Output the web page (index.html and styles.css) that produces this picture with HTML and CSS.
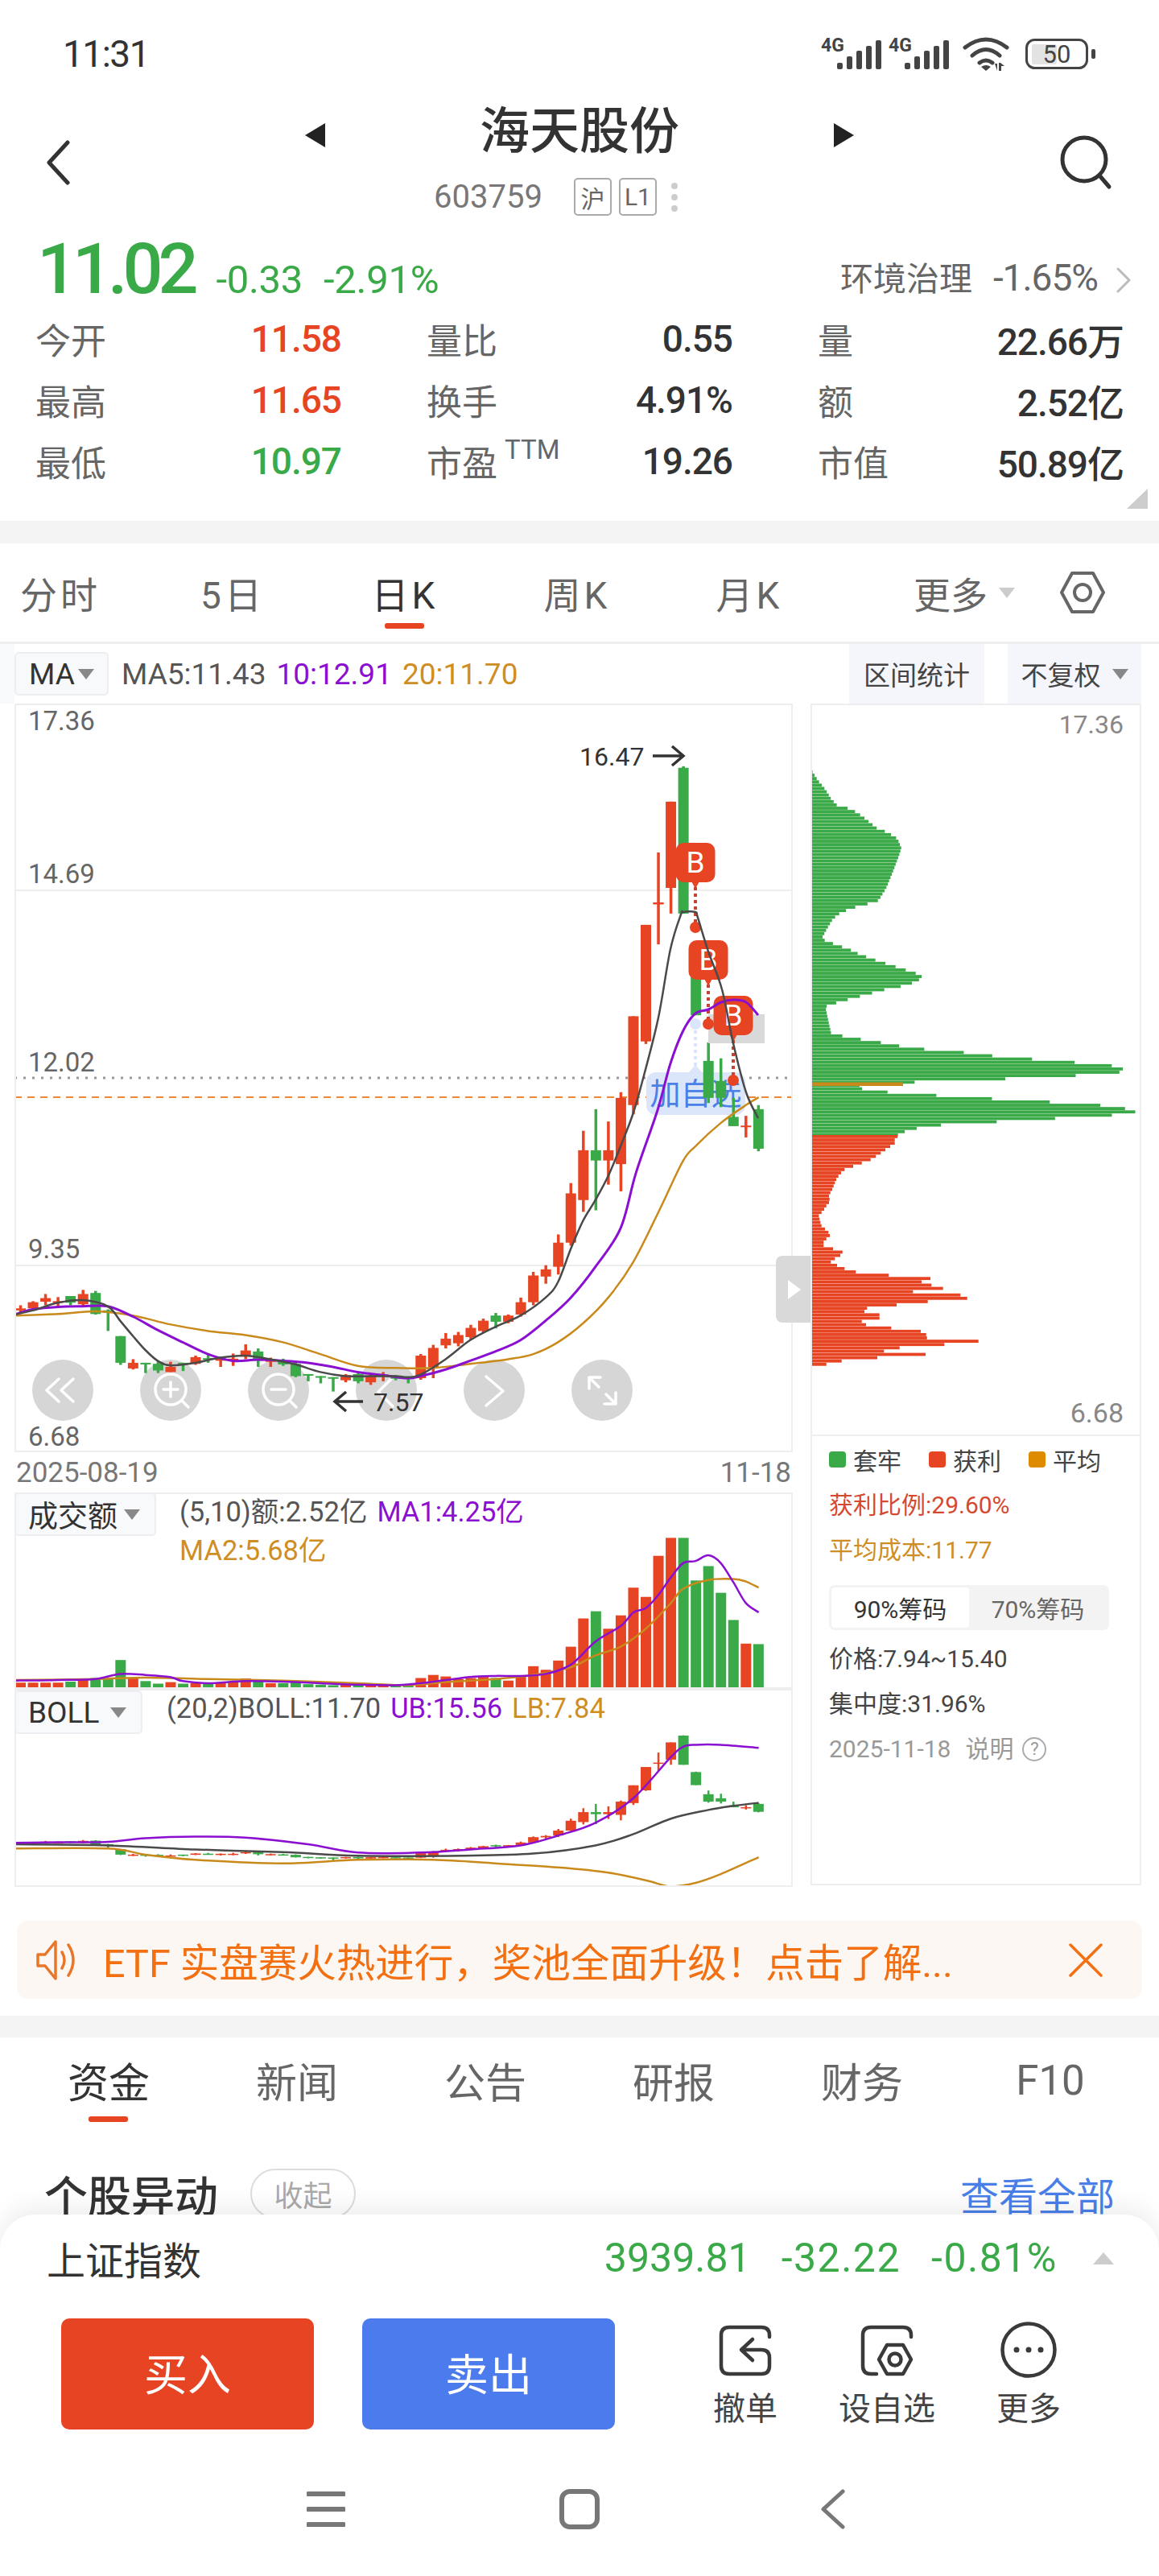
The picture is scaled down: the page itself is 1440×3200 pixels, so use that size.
FILE: index.html
```html
<!DOCTYPE html>
<html lang="zh-CN">
<head>
    <meta charset="UTF-8">
    <meta name="viewport" content="width=device-width, initial-scale=1.0">
    <title>海天股份</title>
    <link rel="stylesheet" href="styles.css">
</head>
<body>

<div class="status">
    <span class="time">11:31</span>
    <div class="status-icons">
        <svg class="sig" viewBox="0 0 76 40"><text x="0" y="17">4G</text><rect x="20" y="31" width="7" height="8" rx="2"/><rect x="32" y="23" width="7" height="16" rx="2"/><rect x="44" y="16" width="7" height="23" rx="2"/><rect x="56" y="10" width="7" height="29" rx="2"/><rect x="68" y="3" width="7" height="36" rx="2"/></svg>
        <svg class="sig" viewBox="0 0 76 40"><text x="0" y="17">4G</text><rect x="20" y="31" width="7" height="8" rx="2"/><rect x="32" y="23" width="7" height="16" rx="2"/><rect x="44" y="16" width="7" height="23" rx="2"/><rect x="56" y="10" width="7" height="29" rx="2"/><rect x="68" y="3" width="7" height="36" rx="2"/></svg>
        <svg class="wifi" viewBox="0 0 58 42"><path d="M3 13Q29 -7 55 13M12 23Q29 8 46 23M21 32Q29 26 37 32" fill="none" stroke="#444" stroke-width="5" stroke-linecap="round"/><path d="M23 37Q29 33 35 37L29 42ZM40 33h3v9zM48 42h-3V32h2l5 4h-4z" fill="#444"/></svg>
        <svg class="battery" viewBox="0 0 88 38"><rect x="1.5" y="1.5" width="75" height="35" rx="10" fill="none" stroke="#444" stroke-width="3"/><rect x="8" y="7" width="31" height="25" rx="2" fill="#e3e3e3"/><text x="39" y="30" text-anchor="middle">50</text><rect x="82" y="13" width="5" height="12" rx="2" fill="#444"/></svg>
    </div>
</div>

<div class="head">
    <svg class="back" viewBox="0 0 30 56"><path d="M27 3L4 28L27 53" fill="none" stroke="#333" stroke-width="5" stroke-linecap="round" stroke-linejoin="round"/></svg>
    <div class="head-center">
        <div class="title-row">
            <span class="tri-left"></span>
            <h1>海天股份</h1>
            <span class="tri-right"></span>
        </div>
        <div class="code-row">
            <span class="code">603759</span>
            <span class="badge">沪</span>
            <span class="badge">L1</span>
            <span class="dots"><i></i><i></i><i></i></span>
        </div>
    </div>
    <svg class="search" viewBox="0 0 70 70"><circle cx="35" cy="30" r="27" fill="none" stroke="#333" stroke-width="5"/><path d="M54 50L66 64" stroke="#333" stroke-width="5" stroke-linecap="round"/></svg>
</div>

<div class="quote">
    <span class="price">11.02</span>
    <span class="change">-0.33</span>
    <span class="change">-2.91%</span>
    <span class="sector">环境治理</span>
    <span class="sector-pct">-1.65%</span>
    <svg class="more-arrow" viewBox="0 0 18 32"><path d="M2 2L16 16L2 30" fill="none" stroke="#bbb" stroke-width="3" stroke-linecap="round" stroke-linejoin="round"/></svg>
</div>

<div class="stats">
    <div class="stat"><span>今开</span><b class="red">11.58</b></div>
    <div class="stat"><span>量比</span><b>0.55</b></div>
    <div class="stat"><span>量</span><b>22.66万</b></div>
    <div class="stat"><span>最高</span><b class="red">11.65</b></div>
    <div class="stat"><span>换手</span><b>4.91%</b></div>
    <div class="stat"><span>额</span><b>2.52亿</b></div>
    <div class="stat"><span>最低</span><b class="green">10.97</b></div>
    <div class="stat"><span>市盈<sup>TTM</sup></span><b>19.26</b></div>
    <div class="stat"><span>市值</span><b>50.89亿</b></div>
    <span class="corner"></span>
</div>

<div class="band"></div>

<div class="periods">
    <span class="period">分时</span>
    <span class="period">5日</span>
    <span class="period active">日K</span>
    <span class="period">周K</span>
    <span class="period">月K</span>
    <span class="period-more">更多</span>
    <span class="caret caret-light"></span>
    <svg class="hex" viewBox="0 0 56 52"><path d="M15 2H41L54 26L41 50H15L2 26Z" fill="none" stroke="#666" stroke-width="4" stroke-linejoin="round"/><circle cx="28" cy="26" r="10" fill="none" stroke="#666" stroke-width="4"/></svg>
</div>

<div class="tools">
    <span class="tools-edge"></span>
    <span class="tag ma-tag">MA<span class="caret"></span></span>
    <span class="ma-values"><span>MA5:11.43</span><span class="purple">10:12.91</span><span class="orange">20:11.70</span></span>
    <span class="tool-btn range-btn">区间统计</span>
    <span class="tool-btn adjust-btn">不复权<span class="caret"></span></span>
</div>

<div class="charts">
    <div class="chart-col">
        <div class="frame main-frame">
            <svg id="mainChart" viewBox="18 874 967 930" width="967" height="930"></svg>
            <span class="side-tab"></span>
        </div>
        <div class="dates"><span>2025-08-19</span><span>11-18</span></div>
        <div class="frame vol-frame">
            <svg id="volChart" viewBox="18 1854 967 244" width="967" height="244"></svg>
            <span class="tag vol-tag">成交额<span class="caret"></span></span>
            <div class="legend vol-legend">
                <div>(5,10)额:2.52亿<span class="purple">MA1:4.25亿</span></div>
                <div class="orange">MA2:5.68亿</div>
            </div>
        </div>
        <div class="frame boll-frame">
            <svg id="bollChart" viewBox="18 2098 967 246" width="967" height="246"></svg>
            <span class="tag boll-tag">BOLL<span class="caret"></span></span>
            <div class="legend boll-legend">(20,2)BOLL:11.70<span class="purple">UB:15.56</span><span class="orange">LB:7.84</span></div>
        </div>
    </div>

    <div class="frame chip-panel">
        <svg id="chipChart" viewBox="1007 874 411 908" width="411" height="908"></svg>
        <div class="chip-info">
            <div class="chip-legend">
                <span><i class="sq-green"></i>套牢</span>
                <span><i class="sq-red"></i>获利</span>
                <span><i class="sq-orange"></i>平均</span>
            </div>
            <div class="chip-line chip-red">获利比例:29.60%</div>
            <div class="chip-line chip-orange">平均成本:11.77</div>
            <div class="seg"><span class="seg-on">90%筹码</span><span>70%筹码</span></div>
            <div class="chip-line">价格:7.94~15.40</div>
            <div class="chip-line">集中度:31.96%</div>
            <div class="chip-line chip-date">2025-11-18<span class="explain">说明</span><span class="help">?</span></div>
        </div>
    </div>
</div>

<div class="banner">
    <svg class="speaker" viewBox="0 0 50 50"><path d="M2 18H11L24 2V48L11 32H2Z M32 15Q38 25 32 35 M40 6Q52 25 40 44" fill="none" stroke="#e8772a" stroke-width="3.5" stroke-linecap="round" stroke-linejoin="round"/></svg>
    <span class="banner-text">ETF 实盘赛火热进行，奖池全面升级！点击了解...</span>
    <svg class="close" viewBox="0 0 42 42"><path d="M2 2L40 40M40 2L2 40" stroke="#f27012" stroke-width="3.5" stroke-linecap="round"/></svg>
</div>

<div class="band band-low"></div>

<div class="news-tabs">
    <span class="news-tab active">资金</span>
    <span class="news-tab">新闻</span>
    <span class="news-tab">公告</span>
    <span class="news-tab">研报</span>
    <span class="news-tab">财务</span>
    <span class="news-tab">F10</span>
</div>

<div class="section-head">
    <h2>个股异动</h2>
    <span class="collapse">收起</span>
    <span class="view-all">查看全部</span>
</div>

<div class="sheet">
    <div class="index-row">
        <span class="index-name">上证指数</span>
        <span class="index-nums"><span>3939.81</span><span>-32.22</span><span>-0.81%</span></span>
        <span class="index-up"></span>
    </div>
    <div class="actions">
        <button class="trade buy">买入</button>
        <button class="trade sell">卖出</button>
        <div class="action">
            <svg viewBox="0 0 64 70"><path d="M27 35H52Q62 35 62 45V55Q62 65 52 65H12Q2 65 2 55V17Q2 7 12 7H52Q62 7 62 17V19M41 22L27 35L41 48" fill="none" stroke="#3a3a3a" stroke-width="4.5" stroke-linecap="round" stroke-linejoin="round"/></svg>
            <span>撤单</span>
        </div>
        <div class="action">
            <svg viewBox="0 0 64 70"><path d="M62 19V17Q62 7 52 7H12Q2 7 2 17V55Q2 65 12 65H19M32 29H52L62 47L52 65H32L22 47Z" fill="none" stroke="#3a3a3a" stroke-width="4.5" stroke-linecap="round" stroke-linejoin="round"/><circle cx="42" cy="47" r="7.5" fill="none" stroke="#3a3a3a" stroke-width="4.5"/></svg>
            <span>设自选</span>
        </div>
        <div class="action">
            <svg viewBox="0 0 70 70"><circle cx="35" cy="35" r="32.5" fill="none" stroke="#3a3a3a" stroke-width="4.5"/><circle cx="20" cy="35" r="3.5" fill="#3a3a3a"/><circle cx="35" cy="35" r="3.5" fill="#3a3a3a"/><circle cx="50" cy="35" r="3.5" fill="#3a3a3a"/></svg>
            <span>更多</span>
        </div>
    </div>
    <div class="nav">
        <svg viewBox="0 0 48 46" width="48" height="46"><path d="M2 4H46M2 23H46M2 42H46" stroke="#777" stroke-width="6" stroke-linecap="round"/></svg>
        <svg viewBox="0 0 50 50" width="50" height="50"><rect x="3" y="3" width="44" height="44" rx="10" fill="none" stroke="#777" stroke-width="6"/></svg>
        <svg viewBox="0 0 32 50" width="32" height="50"><path d="M28 3L4 25L28 47" fill="none" stroke="#777" stroke-width="5" stroke-linecap="round" stroke-linejoin="round"/></svg>
    </div>
</div>

<script src="chart.js"></script>
</body>
</html>
```

FILE: styles.css
```css
* {
    box-sizing: border-box;
}
html, body {
    margin: 0;
    padding: 0;
}
body {
    position: relative;
    width: 1440px;
    height: 3200px;
    overflow: hidden;
    background: #fff;
    color: #333;
    font-family: Roboto, "Noto Sans CJK SC", sans-serif;
}
h1, h2 {
    margin: 0;
    font-weight: 400;
}
.red { color: #e64423; }
.green { color: #3aa948; }
.purple { color: #8b0fd0; }
.orange { color: #cf8e24; }

/* status bar */
.status {
    display: flex;
    justify-content: space-between;
    align-items: center;
    height: 132px;
    padding: 2px 78px 0;
}
.time {
    font-size: 46px;
    letter-spacing: -1.5px;
    color: #333;
}
.status-icons {
    display: flex;
    align-items: center;
}
.sig {
    width: 76px;
    height: 40px;
    margin-right: 8px;
    fill: #444;
    overflow: visible;
}
.sig text {
    font-size: 23px;
    font-weight: 700;
}
.wifi {
    width: 58px;
    height: 42px;
    margin: 0 20px 0 8px;
}
.battery {
    width: 88px;
    height: 38px;
}
.battery text {
    font-size: 31px;
    fill: #444;
}

/* title */
.head {
    display: grid;
    grid-template-columns: 1fr 682px 1fr;
    height: 148px;
}
.back {
    width: 30px;
    height: 56px;
    margin: 42px 0 0 57px;
}
.search {
    width: 70px;
    height: 70px;
    margin: 36px 58px 0 0;
    justify-self: end;
}
.title-row {
    display: flex;
    justify-content: space-between;
    align-items: center;
    height: 64px;
}
.title-row h1 {
    font-size: 62px;
    line-height: 64px;
    font-weight: 500;
    color: #333;
}
.tri-left, .tri-right {
    width: 0;
    height: 0;
    margin-top: 8px;
    border-top: 15px solid transparent;
    border-bottom: 15px solid transparent;
}
.tri-left { border-right: 25px solid #222; }
.tri-right { border-left: 25px solid #222; }
.code-row {
    display: flex;
    align-items: center;
    margin-top: 25px;
    height: 47px;
    padding-left: 160px;
}
.code {
    font-size: 40px;
    color: #777;
    margin-right: 39px;
}
.badge {
    display: flex;
    align-items: center;
    justify-content: center;
    width: 47px;
    height: 47px;
    margin-right: 9px;
    border: 2px solid #aaa;
    border-radius: 5px;
    font-size: 30px;
    color: #666;
}
.dots {
    display: flex;
    flex-direction: column;
    gap: 6px;
    margin-left: 9px;
}
.dots i {
    width: 8px;
    height: 8px;
    border-radius: 50%;
    background: #ccc;
}

/* quote line */
.quote {
    display: flex;
    align-items: baseline;
    height: 103px;
    padding: 9px 0 0 46px;
}
.price {
    font-size: 88px;
    line-height: 90px;
    font-weight: 500;
    letter-spacing: -6px;
    color: #3aa948;
    margin-right: 28px;
}
.change {
    font-size: 49px;
    letter-spacing: -0.3px;
    color: #3aa948;
    margin-right: 26px;
}
.sector {
    position: relative;
    top: -3px;
    margin-left: auto;
    font-size: 41px;
    color: #666;
    margin-right: 26px;
}
.sector-pct {
    position: relative;
    top: -3px;
    font-size: 46px;
    letter-spacing: -1px;
    color: #666;
}
.more-arrow {
    width: 18px;
    height: 32px;
    margin: 0 35px 0 23px;
}

/* stat grid */
.stats {
    position: relative;
    display: grid;
    grid-template-columns: repeat(3, 380px);
    grid-auto-rows: 76px;
    column-gap: 106px;
    height: 264px;
    padding-left: 44px;
}
.stat {
    display: flex;
    justify-content: space-between;
    align-items: center;
    font-size: 44px;
}
.stat span {
    color: #666;
}
.stat b {
    font-size: 46px;
    font-weight: 500;
    letter-spacing: -1px;
}
.stat sup {
    font-size: 33px;
    margin-left: 9px;
    vertical-align: 22px;
    line-height: 0;
}
.corner {
    position: absolute;
    left: 1400px;
    top: 224px;
    width: 0;
    height: 0;
    border-bottom: 25px solid #ccc;
    border-left: 26px solid transparent;
}
.band {
    height: 28px;
    background: #f4f4f4;
}

/* period tabs */
.periods {
    display: flex;
    align-items: center;
    height: 125px;
    border-bottom: 3px solid #eee;
    margin-left: -32px;
}
.period {
    position: relative;
    display: flex;
    align-items: center;
    justify-content: center;
    width: 214px;
    height: 122px;
    font-size: 46px;
    color: #666;
    letter-spacing: 4px;
}
.period.active {
    color: #333;
}
.period.active::after {
    content: "";
    position: absolute;
    left: 82px;
    bottom: 16px;
    width: 49px;
    height: 7px;
    border-radius: 3px;
    background: #e64423;
}
.period-more {
    margin-left: 97px;
    font-size: 46px;
    color: #666;
}
.caret {
    display: inline-block;
    width: 0;
    height: 0;
    border-left: 10px solid transparent;
    border-right: 10px solid transparent;
    border-top: 13px solid #888;
}
.caret-light {
    margin-left: 14px;
    border-top-color: #ccc;
}
.hex {
    width: 56px;
    height: 52px;
    margin-left: 56px;
}

/* indicator toolbar */
.tools {
    display: flex;
    align-items: center;
    height: 74px;
}
.tools-edge {
    width: 18px;
    align-self: stretch;
    background: #f8f9fb;
}
.tag {
    display: flex;
    align-items: center;
    justify-content: space-between;
    padding: 0 16px;
    background: #f8f9fb;
    border: 2px solid #eceef2;
    border-radius: 5px;
    color: #333;
    font-size: 37px;
}
.ma-tag {
    width: 117px;
    height: 54px;
}
.ma-values {
    display: flex;
    gap: 13px;
    margin-left: 16px;
    font-size: 37px;
    color: #555;
}
.tool-btn {
    display: flex;
    align-items: center;
    justify-content: center;
    align-self: stretch;
    background: #f5f6fb;
    font-size: 33px;
    color: #444;
}
.range-btn {
    width: 168px;
    margin-left: auto;
}
.adjust-btn {
    width: 166px;
    margin: 0 22px 0 29px;
    gap: 14px;
}

/* charts */
.charts {
    display: grid;
    grid-template-columns: 967px 411px;
    column-gap: 22px;
    height: 1470px;
    padding-left: 18px;
}
.frame {
    position: relative;
    outline: 2px solid #eee;
    outline-offset: -2px;
}
.frame svg {
    display: block;
}
.main-frame { height: 930px; }
.vol-frame { height: 244px; }
.boll-frame { height: 246px; }
.dates {
    display: flex;
    justify-content: space-between;
    align-items: center;
    height: 50px;
    padding: 0 2px;
    font-size: 35px;
    color: #777;
}
.side-tab {
    position: absolute;
    left: 946px;
    top: 686px;
    width: 44px;
    height: 83px;
    border-radius: 8px 0 0 8px;
    background: #d9d9d9;
}
.side-tab::after {
    content: "";
    position: absolute;
    left: 15px;
    top: 30px;
    border-top: 12px solid transparent;
    border-bottom: 12px solid transparent;
    border-left: 16px solid #fff;
}
.vol-tag, .boll-tag {
    position: absolute;
    left: 0;
    top: 0;
    height: 54px;
    padding: 0 18px 0 15px;
}
.vol-tag { width: 176px; }
.boll-tag { width: 159px; top: 2px; }
.legend {
    position: absolute;
    font-size: 34.5px;
    color: #555;
    white-space: nowrap;
}
.legend span {
    margin-left: 12px;
}
.vol-legend {
    left: 205px;
    top: 0;
    line-height: 48px;
}
.boll-legend {
    left: 189px;
    top: 2px;
    line-height: 44px;
}

/* chip panel */
.chip-panel {
    height: 1468px;
}
.chip-info {
    padding: 0 0 0 23px;
    border-top: 2px solid #eee;
    height: 560px;
}
.chip-legend {
    display: flex;
    gap: 34px;
    height: 58px;
    align-items: center;
    font-size: 30px;
    color: #444;
}
.chip-legend span {
    display: flex;
    align-items: center;
    gap: 9px;
}
.chip-legend i {
    width: 21px;
    height: 20px;
    border-radius: 4px;
}
.sq-green { background: #3aa948; }
.sq-red { background: #e64423; }
.sq-orange { background: #de8b00; }
.chip-line {
    height: 56px;
    line-height: 56px;
    font-size: 30px;
    color: #444;
    white-space: nowrap;
}
.chip-red { color: #d44a30; }
.chip-orange { color: #cf8e24; }
.chip-date {
    display: flex;
    align-items: center;
    color: #999;
}
.explain {
    margin-left: 18px;
}
.help {
    display: flex;
    align-items: center;
    justify-content: center;
    width: 30px;
    height: 30px;
    margin-left: 11px;
    border: 2px solid #aaa;
    border-radius: 50%;
    font-size: 22px;
}
.seg {
    display: flex;
    width: 348px;
    height: 56px;
    margin: 15px 0 8px;
    padding: 3px;
    border-radius: 7px;
    background: #f3f3f3;
    font-size: 30px;
    color: #666;
}
.seg span {
    display: flex;
    align-items: center;
    justify-content: center;
    flex: 1;
}
.seg-on {
    background: #fff;
    color: #333;
    border-radius: 4px;
}

/* notice banner */
.banner {
    display: flex;
    align-items: center;
    height: 97px;
    margin: 42px 21px 0;
    padding: 0 49px 0 24px;
    background: #fdf7f3;
    border-radius: 14px;
}
.speaker {
    width: 50px;
    height: 50px;
    margin-right: 33px;
}
.banner-text {
    font-size: 48.5px;
    color: #f27012;
    white-space: nowrap;
}
.close {
    width: 42px;
    height: 42px;
    margin-left: auto;
}
.band-low {
    margin-top: 21px;
    height: 27px;
}

/* lower tabs */
.news-tabs {
    display: grid;
    grid-template-columns: repeat(6, 234px);
    height: 106px;
    padding-left: 18px;
}
.news-tab {
    position: relative;
    display: flex;
    align-items: center;
    justify-content: center;
    font-size: 51px;
    color: #666;
}
.news-tab.active {
    color: #333;
}
.news-tab.active::after {
    content: "";
    position: absolute;
    left: 92px;
    bottom: 1px;
    width: 49px;
    height: 7px;
    border-radius: 3px;
    background: #e64423;
}
.section-head {
    display: flex;
    align-items: center;
    height: 100px;
    margin-top: 38px;
    padding: 0 55px;
}
.section-head h2 {
    font-size: 54px;
    color: #333;
    font-weight: 500;
}
.collapse {
    display: flex;
    align-items: center;
    justify-content: center;
    width: 131px;
    height: 62px;
    margin-left: 40px;
    border: 2px solid #ddd;
    border-radius: 31px;
    font-size: 36px;
    color: #aaa;
}
.view-all {
    margin-left: auto;
    font-size: 48px;
    color: #4a7fe8;
}

/* bottom sheet lies over the page */
.sheet {
    position: absolute;
    left: 0;
    right: 0;
    top: 2751px;
    bottom: 0;
    background: #fff;
    border-radius: 44px 44px 0 0;
    box-shadow: 0 -10px 30px rgba(0, 0, 0, 0.07);
}
.index-row {
    display: flex;
    align-items: center;
    height: 108px;
    padding: 0 56px 0 58px;
}
.index-name {
    font-size: 48px;
    color: #333;
}
.index-nums {
    display: flex;
    gap: 38px;
    margin-left: auto;
    font-size: 50px;
    color: #3aa948;
}
.index-nums span + span {
    letter-spacing: 1.5px;
}
.index-up {
    margin-left: 44px;
    border-left: 13px solid transparent;
    border-right: 13px solid transparent;
    border-bottom: 15px solid #ccc;
}
.actions {
    display: flex;
    margin-top: 21px;
    padding-left: 76px;
}
.trade {
    width: 314px;
    height: 138px;
    padding: 0 0 5px;
    border: 0;
    border-radius: 10px;
    font-family: inherit;
    font-size: 54px;
    color: #fff;
}
.buy { background: #e64423; }
.sell {
    margin-left: 60px;
    background: #4b7bec;
}
.action {
    display: flex;
    flex-direction: column;
    align-items: center;
    width: 176px;
    font-size: 40px;
    color: #444;
}
.action:nth-child(3) {
    margin-left: 74px;
}
.action svg {
    height: 70px;
    width: 70px;
    margin-top: 4px;
}
.action span {
    margin-top: 14px;
    line-height: 50px;
}
.nav {
    display: grid;
    grid-template-columns: repeat(3, 315px);
    justify-items: center;
    align-items: center;
    justify-content: center;
    margin-top: 74px;
}
```

FILE: chart.js
```js
const RED = '#e64423';
const GREEN = '#3aa948';
const PURPLE = '#8b0fd0';
const ORANGE = '#c98a1b';
const DARK = '#4a4a4a';

// rows and lines were traced off the 1000px crop, so they are in 1.568x units
const S = 1.568;
const X = i => 25.5 + 15.54 * i;
const Y = v => 1360 + v / S;
const P = ([x, y]) => [x / S, Y(y)];

// top, bottom, high, low, colour
const candles = [
    [416,420,410,427,'r'],[404,416,402,420,'r'],[396,403,388,410,'r'],[402,405,394,415,'r'],
    [392,405,392,410,'g'],[388,408,380,412,'r'],[386,427,382,428,'g'],[420,424,418,460,'g'],
    [470,522,470,526,'g'],[522,533,515,535,'r'],[522,525,522,542,'g'],[524,537,518,542,'g'],
    [530,540,520,540,'r'],[522,525,522,538,'g'],[511,524,508,526,'r'],[513,515,505,522,'g'],
    [514,518,510,530,'r'],[514,518,504,528,'r'],[498,510,486,515,'r'],[500,518,494,530,'g'],
    [517,520,512,530,'r'],[520,525,514,528,'g'],[524,548,520,550,'g'],[544,547,544,558,'g'],
    [548,551,548,562,'g'],[550,553,550,578,'g'],[546,556,544,560,'r'],[544,558,542,562,'g'],
    [547,560,544,565,'r'],[545,549,540,558,'r'],[548,553,546,556,'g'],[550,553,550,562,'g'],
    [508,552,505,555,'r'],[493,531,487,552,'r'],[475,488,464,494,'r'],[468,484,462,490,'r'],
    [454,472,448,478,'r'],[440,460,436,464,'r'],[430,442,425,455,'g'],[430,442,428,445,'r'],
    [404,428,395,432,'r'],[352,404,345,410,'r'],[340,354,332,368,'r'],[288,335,272,350,'r'],
    [192,288,172,294,'r'],[108,205,70,228,'r'],[108,128,28,225,'g'],[108,128,52,175,'r'],
    [6,135,-5,188,'r'],[-153,20,-153,38,'r'],[-331,-104,-331,-99,'r'],[-374,-372,-472,-293,'r'],
    [-571,-403,-571,-353,'r'],[-637,-353,-640,-353,'g'],[-282,-155,-286,-155,'g'],[-66,6,-102,16,'g'],
    [-27,6,-71,24,'g'],[43,61,6,61,'g'],[60,63,41,83,'r'],[28,105,20,110,'g']
];

// top of each turnover bar, same units
const volumes = [
    [1145,'r'],[1145,'r'],[1145,'r'],[1145,'r'],[1143,'g'],[1138,'r'],[1136,'g'],[1138,'g'],
    [1101,'g'],[1136,'r'],[1142,'g'],[1147,'g'],[1144,'r'],[1147,'g'],[1146,'r'],[1147,'g'],
    [1146,'r'],[1143,'r'],[1137,'r'],[1139,'g'],[1146,'r'],[1146,'g'],[1142,'g'],[1148,'g'],
    [1149,'g'],[1150,'g'],[1147,'r'],[1147,'g'],[1149,'r'],[1150,'r'],[1150,'g'],[1150,'g'],
    [1136,'r'],[1130,'r'],[1133,'r'],[1138,'r'],[1136,'r'],[1134,'r'],[1136,'g'],[1141,'r'],
    [1132,'r'],[1113,'r'],[1120,'r'],[1102,'r'],[1075,'r'],[1020,'r'],[1006,'g'],[1040,'r'],
    [1014,'r'],[960,'r'],[978,'r'],[898,'r'],[863,'r'],[863,'g'],[946,'g'],[918,'g'],
    [970,'g'],[1023,'g'],[1069,'r'],[1070,'g']
];

const ma5 = [[28,428],[64,420],[113,405],[161,400],[210,412],[234,440],[259,470],[283,497],[307,518],[331,527],[380,522],[429,512],[478,508],[526,515],[575,525],[624,540],[673,548],[721,548],[770,548],[794,550],[819,545],[868,515],[916,478],[965,452],[1014,430],[1063,395],[1087,365],[1112,300],[1136,245],[1160,205],[1185,158]].map(P)
    .concat([[771,1424],[787,1382],[800,1336],[818,1264],[833,1179],[846,1136],[849,1133],[864,1133],[867,1140],[880,1182],[897,1229],[911,1296],[927,1357],[942,1389]]);
const ma10 = [[28,428],[64,418],[113,413],[161,412],[210,412],[259,432],[307,458],[356,482],[405,505],[453,518],[502,516],[551,518],[600,522],[648,530],[697,540],[746,546],[794,552],[819,548],[868,535],[916,518],[965,500],[1014,478],[1063,440],[1112,395],[1160,335],[1209,260],[1239,152]].map(P)
    .concat([[817,1379],[833,1321],[849,1280],[864,1259],[880,1254],[896,1245],[911,1242],[927,1245],[942,1261]]);
const ma20 = [[28,430],[113,427],[186,422],[259,430],[331,447],[405,460],[478,468],[551,482],[624,505],[697,528],[770,532],[843,532],[916,524],[990,515],[1039,505],[1087,482],[1136,445],[1185,395],[1234,325],[1282,230],[1330,130],[1355,100],[1404,55],[1453,20],[1478,5]].map(P);

const volMa1 = [[28,1141],[113,1140],[186,1138],[234,1128],[283,1130],[331,1134],[356,1142],[405,1146],[478,1142],[551,1143],[624,1146],[697,1149],[770,1150],[819,1146],[868,1140],[916,1134],[965,1132],[1014,1132],[1063,1128],[1112,1110],[1160,1065],[1209,1035],[1234,1008],[1258,1000],[1282,975],[1307,940],[1331,912],[1355,908],[1380,897],[1404,912],[1429,950],[1453,990],[1478,1008]].map(P);
const volMa2 = [[28,1140],[186,1138],[283,1135],[405,1138],[551,1141],[697,1146],[794,1150],[868,1144],[965,1138],[1039,1130],[1112,1115],[1160,1092],[1209,1075],[1258,1040],[1307,990],[1331,962],[1380,945],[1429,943],[1453,948],[1478,960]].map(P);

const bollMid = [[28,1460],[210,1462],[380,1470],[551,1475],[697,1482],[900,1482],[1039,1478],[1160,1462],[1234,1440],[1307,1410],[1380,1393],[1429,1385],[1478,1379]].map(P);
const bollUp = [[28,1457],[113,1456],[210,1455],[283,1448],[380,1445],[478,1447],[600,1460],[697,1476],[819,1476],[916,1470],[1014,1462],[1087,1443],[1160,1418],[1234,1370],[1307,1290],[1331,1270],[1355,1266],[1404,1266],[1478,1272]].map(P);
const bollLow = [[28,1468],[210,1468],[283,1480],[380,1490],[551,1497],[697,1490],[843,1490],[965,1497],[1087,1505],[1185,1515],[1258,1530],[1307,1542],[1355,1535],[1404,1518],[1478,1485]].map(P);

// chip profile knots off the 740px crop: row y, right edge (2.613x / 2.119x)
const chipKnots = [[150,655],[180,670],[210,690],[240,705],[260,720],[275,760],[295,785],[315,805],[335,825],[350,855],[370,880],[400,890],[420,885],[470,870],[530,850],[570,830],[580,805],[595,760],[610,730],[630,710],[660,695],[695,680],[710,710],[730,755],[745,780],[765,825],[785,875],[805,925],[815,945],[830,935],[845,905],[860,845],[880,785],[900,725],[915,690],[945,695],[1000,705],[1010,735],[1020,780],[1030,830],[1040,875],[1050,920],[1060,1030],[1075,1135],[1085,1235],[1095,1340],[1105,1440],[1115,1470],[1125,1485],[1135,1410],[1145,1235],[1155,1065],[1165,780],[1180,780],[1190,830],[1200,945],[1210,1080],[1220,1220],[1230,1365],[1240,1465],[1250,1490],[1262,1520],[1272,1370],[1285,1200],[1295,1030],[1305,945],[1320,900],[1332,880]];
// right edge of each profit row off the 300px crop (3x)
const chipRed = [345,335,335,318,300,283,265,245,212,180,148,135,125,117,112,107,102,95,90,92,90,80,72,62,52,55,58,62,75,88,93,80,70,70,105,140,132,112,97,120,148,190,313,468,435,472,515,403,580,605,458,342,232,222,278,278,212,228,322,432,452,455,647,520,353,295,450,270,137,80];

function smooth(pts) {
    let d = `M${pts[0][0].toFixed(1)} ${pts[0][1].toFixed(1)}`;
    for (let i = 0; i < pts.length - 1; i++) {
        const a = pts[Math.max(i - 1, 0)], b = pts[i], c = pts[i + 1], e = pts[Math.min(i + 2, pts.length - 1)];
        const x1 = b[0] + (c[0] - a[0]) / 6, y1 = b[1] + (c[1] - a[1]) / 6;
        const x2 = c[0] - (e[0] - b[0]) / 6, y2 = c[1] - (e[1] - b[1]) / 6;
        d += `C${x1.toFixed(1)} ${y1.toFixed(1)} ${x2.toFixed(1)} ${y2.toFixed(1)} ${c[0].toFixed(1)} ${c[1].toFixed(1)}`;
    }
    return d;
}

const line = (pts, color, w = 2.5) =>
    `<path d="${smooth(pts)}" fill="none" stroke="${color}" stroke-width="${w}" stroke-linejoin="round"/>`;

function candleRects(mapY, wick, minH) {
    let out = '';
    candles.forEach((c, i) => {
        const color = c[4] === 'r' ? RED : GREEN;
        const x = X(i), top = mapY(c[0]), bot = mapY(c[1]);
        out += `<rect x="${x - wick / 2}" y="${mapY(c[2])}" width="${wick}" height="${mapY(c[3]) - mapY(c[2])}" fill="${color}"/>`;
        out += `<rect x="${x - 6.5}" y="${top}" width="13" height="${Math.max(bot - top, minH)}" fill="${color}"/>`;
    });
    return out;
}

function marker(x, top, dotY) {
    return `<path d="M${x - 6} ${top + 46}L${x} ${top + 57}L${x + 6} ${top + 46}Z" fill="${RED}"/>`
        + `<rect x="${x - 24.5}" y="${top}" width="49" height="49" rx="10" fill="${RED}"/>`
        + `<text x="${x}" y="${top + 37}" text-anchor="middle" font-size="37" fill="#fff">B</text>`
        + `<path d="M${x} ${top + 55}V${dotY}" stroke="#c4442f" stroke-width="4" stroke-dasharray="4 4"/>`
        + `<circle cx="${x}" cy="${dotY}" r="7" fill="${RED}"/>`;
}

const label = (x, y, s, color = '#666', size = 33, anchor = 'start') =>
    `<text x="${x}" y="${y}" font-size="${size}" fill="${color}" text-anchor="${anchor}">${s}</text>`;

function drawMain() {
    const cx = [78, 212, 346, 480, 614, 748];
    const st = 'fill="none" stroke="#fff" stroke-width="3.5" stroke-linecap="round" stroke-linejoin="round"';
    let s = cx.map(x => `<circle cx="${x}" cy="1727" r="38" fill="#d6d6d6"/>`).join('');
    s += `<path d="M73 1713L58 1727L73 1741M91 1713L76 1727L91 1741" ${st}/>`;
    s += `<circle cx="212" cy="1726" r="19" ${st}/><path d="M203 1726H221M212 1717V1735M226 1740L234 1748" ${st}/>`;
    s += `<circle cx="346" cy="1726" r="19" ${st}/><path d="M337 1726H355M360 1740L368 1748" ${st}/>`;
    s += `<path d="M488 1711L470 1729L488 1747" ${st}/>`;
    s += `<path d="M604 1710L625 1728L604 1746" ${st}/>`;
    s += `<path d="M732 1725V1711H746M732 1711L744 1723M765 1730V1744H751M765 1744L753 1732" ${st}/>`;

    // grid
    s += '<path d="M18 1106H985M18 1572H985" stroke="#eee" stroke-width="2"/>';
    s += '<path d="M18 1339H985" stroke="#999" stroke-width="3" stroke-dasharray="3 8"/>';
    s += '<path d="M18 1363H985" stroke="#e8863a" stroke-width="2" stroke-dasharray="9 7"/>';

    // add-to-watchlist pill
    s += '<rect x="803" y="1332" width="123" height="53" rx="12" fill="#dbe6fb"/>';
    s += '<path d="M864 1272V1325" stroke="#dbe6fb" stroke-width="4" stroke-dasharray="4 4"/>';
    s += '<circle cx="864" cy="1272" r="7" fill="#dbe6fb"/><path d="M855 1333L864 1323L873 1333Z" fill="#dbe6fb"/>';
    s += label(864.5, 1372, '加自选', '#4a7fe8', 38, 'middle');

    s += candleRects(Y, 3.5, 2);
    s += `<rect x="${X(51) - 6.5}" y="1121" width="13" height="2" fill="${RED}"/>`;
    s += '<rect x="880" y="1260" width="70" height="36" fill="#d9d9d9"/>';
    s += marker(864, 1047, 1152) + marker(880, 1168, 1272) + marker(911, 1237, 1342);
    s += line(ma20, ORANGE) + line(ma10, PURPLE, 3) + line(ma5, DARK, 2.5);

    s += label(720, 951, '16.47', '#333', 32);
    s += '<path d="M811 939H848M835 927L849 939L835 951" fill="none" stroke="#333" stroke-width="3.5"/>';
    s += label(464, 1753, '7.57', '#333', 32);
    s += '<path d="M451 1741H416M430 1729L416 1741L430 1753" fill="none" stroke="#333" stroke-width="3.5"/>';

    s += label(35, 907, '17.36') + label(35, 1097, '14.69') + label(35, 1331, '12.02');
    s += label(35, 1563, '9.35') + label(35, 1796, '6.68');
    document.getElementById('mainChart').innerHTML = s;
}

function drawVol() {
    let s = '';
    volumes.forEach((v, i) => {
        const top = Y(v[0]);
        s += `<rect x="${X(i) - 6.5}" y="${top}" width="13" height="${Y(1158) - top}" fill="${v[1] === 'r' ? RED : GREEN}"/>`;
    });
    s += `<path d="M18 ${Y(1158)}H985" stroke="#eee" stroke-width="2"/>`;
    s += line(volMa2, ORANGE) + line(volMa1, PURPLE);
    document.getElementById('volChart').innerHTML = s;
}

function drawBoll() {
    // the same candles squeezed into the lower pane
    const mapY = v => Y(1305 + (v + 353) * 0.2);
    let s = candleRects(mapY, 2.5, 1.5);
    s += line(bollLow, ORANGE) + line(bollMid, DARK) + line(bollUp, PURPLE);
    document.getElementById('bollChart').innerHTML = s;
}

function edgeAt(yz) {
    for (let i = 0; i < chipKnots.length - 1; i++) {
        const a = chipKnots[i], b = chipKnots[i + 1];
        if (yz <= b[0]) return a[1] + (b[1] - a[1]) * (yz - a[0]) / (b[0] - a[0]);
    }
    return 880;
}

function drawChips() {
    let s = '';
    for (let y = 957; y < 1410; y += 4.1) {
        const w = (edgeAt((y + 1.5 - 900) * 2.613) - 653) / 2.119;
        s += `<rect x="1008" y="${y.toFixed(1)}" width="${w.toFixed(1)}" height="3.8" fill="${GREEN}"/>`;
    }
    chipRed.forEach((edge, i) => {
        const y = 1410 + i * 4.1;
        s += `<rect x="1008" y="${y.toFixed(1)}" width="${((edge - 24) / 3).toFixed(1)}" height="3.8" fill="${RED}"/>`;
    });
    s += `<rect x="1008" y="1344.5" width="114" height="4.5" fill="${ORANGE}"/>`;
    s += label(1396, 911, '17.36', '#888', 32, 'end') + label(1396, 1767, '6.68', '#888', 34, 'end');
    document.getElementById('chipChart').innerHTML = s;
}

drawMain();
drawVol();
drawBoll();
drawChips();
```
